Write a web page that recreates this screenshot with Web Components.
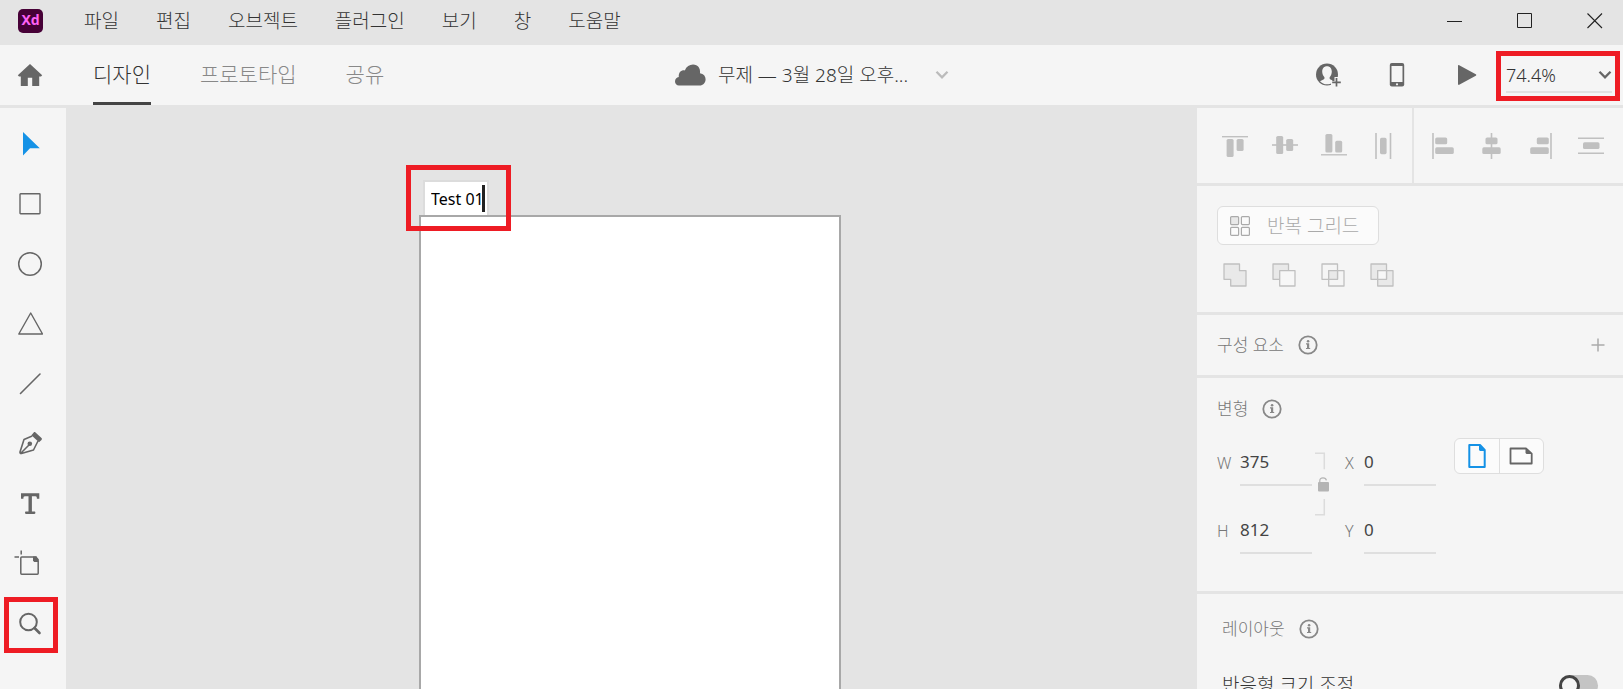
<!DOCTYPE html>
<html lang="ko">
<head>
<meta charset="utf-8">
<title>무제 — Xd</title>
<style>
html, body { margin: 0; height: 100%; }
body { font-family: "Noto Sans", "Noto Sans CJK KR", sans-serif; font-size: 19px; font-weight: 300; line-height: 24px; color: #333; background: #e4e4e4; overflow: hidden; }
</style>
</head>
<body>
<xd-app></xd-app>
<script>
const ICONS = {
  home: [26, 24, '<path fill="currentColor" d="M13 1 .8 12.3 2 13.4h1.8V23h7v-8.2h4.4V23h7v-9.600H24l1.200-1.100z"/>'],
  cloud: [32, 24, '<path fill="currentColor" d="M5 22.500c-2.400 0-4-1.700-4-4 0-2.400 1.600-4 3.800-4.400C4.300 9.800 7 7 10.800 7.400 12.400 3.600 15.500 1.500 19 1.500c5 0 7.700 4 7 8.700 3.600.6 5.600 3 5.600 6 0 3.700-2.600 6.300-6 6.300z"/>'],
  chevron: [14, 10, '<path fill="none" stroke="currentColor" stroke-width="2.300" d="m1.500 1.800 5.500 5.500 5.500-5.500"/>'],
  user: [26, 26, '<circle cx="12" cy="12.500" r="11" fill="currentColor"/><path fill="#f5f5f5" d="M12 4.200c-3 0-4.800 2.200-4.800 5.300 0 2.300.8 4 1.900 5.300.8 1 .5 2.200-.6 2.700L5 19.200c1.800 2 4.200 3.100 7 3.100 2 0 3.800-.5 5.300-1.500v-2.600l-1.800-.7c-1-.5-1.300-1.700-.5-2.700 1.100-1.400 1.800-3 1.800-5.300C16.800 6.400 15 4.200 12 4.200z"/><path fill="#f5f5f5" d="M19.500 15H26v11H16v-7h3.500z"/><path stroke="currentColor" stroke-width="1.700" d="M21.500 16v8.500M17.200 20.300h8.600"/>'],
  phone: [16, 26, '<rect x=".8" y="1" width="14.400" height="23.600" rx="2" fill="currentColor"/><path fill="#f5f5f5" d="M2.500 4h11v16h-11z"/><circle cx="8" cy="22.300" r="1.100" fill="#f5f5f5"/>'],
  play: [20, 22, '<path fill="currentColor" d="M1 1.800c0-.8.6-1 1.200-.6l16.600 9c.6.400.6 1.100 0 1.500l-16.600 9c-.6.400-1.200.1-1.200-.6z"/>'],
  min: [16, 16, '<path stroke="currentColor" d="M0 8.500h15"/>'],
  max: [16, 16, '<path fill="none" stroke="currentColor" d="M.5.5h14v14H.5z"/>'],
  close: [16, 16, '<path stroke="currentColor" stroke-width="1.100" d="m.5.5 14.500 14.500m0-14.500L.5 15"/>'],
  select: [26, 26, '<path fill="currentColor" d="M6 1v23.500l7-7.300h9.800z"/>'],
  rect: [26, 26, '<rect x="3" y="2.700" width="20" height="20" rx=".6" fill="none" stroke="currentColor" stroke-width="1.400"/>'],
  ellipse: [26, 26, '<circle cx="13" cy="13" r="11.300" fill="none" stroke="currentColor" stroke-width="1.500"/>'],
  polygon: [26, 26, '<path fill="none" stroke="currentColor" stroke-width="1.400" stroke-linejoin="round" d="M13.700 2 25.500 23H1.800z"/>'],
  line: [26, 26, '<path stroke="currentColor" stroke-width="1.600" stroke-linecap="round" d="M3.500 22.500 23 3"/>'],
  pen: [26, 26, '<path fill="none" stroke="currentColor" stroke-width="1.600" stroke-linejoin="round" d="M15.200 5 7 8.500 3 21c-.2 1 .4 1.700 1.400 1.500L16.500 19l4.500-9M4 22l8-8"/><circle cx="12.800" cy="12.700" r="2.300" fill="currentColor"/><path fill="currentColor" d="m14.400 4.300 2.300-2.800c.6-.6 1.200-.6 1.800 0l6 5.600c.6.6.6 1.200 0 1.800L22 11.300z"/>'],
  text: [26, 26, '<path fill="currentColor" d="M4 2.200h18.300v5.500h-2.400c0-1.700-.3-2.500-1.500-2.500h-3.500v15.300h2.500c1.300 0 1.300 2.400 0 2.400H9c-1.300 0-1.300-2.400 0-2.400h2.500V5.200H8c-1.300 0-1.600.8-1.600 2.500H4z"/>'],
  artboard: [32, 28, '<g transform="translate(-1 -1)"><path fill="none" stroke="currentColor" stroke-width="1.500" d="M23 8H8.700c-.5 0-.9.400-.9.900v15.400c0 .5.400.9.900.9h15.600c.5 0 .9-.4.900-.9V13z"/><path fill="currentColor" d="M20 7.500h3.200l2.600 2.800V13h-4.600L20 11.800z"/><path stroke="currentColor" stroke-width="1.500" d="M8.200 1.500v4M1.500 8H6"/></g>'],
  zoom: [26, 26, '<circle cx="11.500" cy="11" r="8.300" fill="none" stroke="currentColor" stroke-width="2"/><path stroke="currentColor" stroke-width="2.600" stroke-linecap="round" d="m17.500 17 5 5"/>'],
  alTop: [26, 26, '<path stroke="currentColor" stroke-width="1.400" d="M0 3.700h26"/><rect x="4.600" y="6" width="7" height="18" rx="1.600" fill="currentColor"/><rect x="14.600" y="6" width="7" height="12" rx="1.600" fill="currentColor"/>'],
  alMid: [26, 26, '<path stroke="currentColor" stroke-width="1.600" d="M0 12h26"/><rect x="4.200" y="3" width="7" height="18" rx="1.600" fill="currentColor"/><rect x="14.200" y="6" width="7" height="12" rx="1.600" fill="currentColor"/>'],
  alBot: [26, 26, '<path stroke="currentColor" stroke-width="1.400" d="M0 21.800h26"/><rect x="4.400" y="1" width="7" height="18.600" rx="1.600" fill="currentColor"/><rect x="14.200" y="7.800" width="7" height="11.800" rx="1.600" fill="currentColor"/>'],
  disH: [26, 26, '<path stroke="currentColor" stroke-width="1.600" d="M5 0v26M19.500 0v26"/><rect x="9" y="4.800" width="6.600" height="16.400" rx="1.600" fill="currentColor"/>'],
  alLeft: [26, 26, '<path stroke="currentColor" stroke-width="1.600" d="M3 0v26"/><rect x="5.200" y="4.500" width="12" height="6.800" rx="1.600" fill="currentColor"/><rect x="5.200" y="14.300" width="18.600" height="6.800" rx="1.600" fill="currentColor"/>'],
  alCen: [26, 26, '<path stroke="currentColor" stroke-width="1.600" d="M12.500 0v26"/><rect x="6.500" y="4.500" width="12" height="6.800" rx="1.600" fill="currentColor"/><rect x="3.300" y="14.300" width="18.400" height="6.800" rx="1.600" fill="currentColor"/>'],
  alRight: [26, 26, '<path stroke="currentColor" stroke-width="1.600" d="M22 0v26"/><rect x="7.800" y="4.500" width="12" height="6.800" rx="1.600" fill="currentColor"/><rect x="1.200" y="14.300" width="18.600" height="6.800" rx="1.600" fill="currentColor"/>'],
  disV: [26, 26, '<path stroke="currentColor" stroke-width="1.500" d="M0 5.200h26M0 20.200h26"/><rect x="5" y="9.200" width="16.500" height="6.900" rx="1.600" fill="currentColor"/>'],
  grid: [20, 20, '<g fill="none" stroke="currentColor" stroke-width="1.200"><rect x=".6" y=".6" width="8" height="8" rx="1" fill="#e8e8e8"/><rect x="11.400" y=".6" width="8" height="8" rx="1"/><rect x=".6" y="11.400" width="8" height="8" rx="1"/><rect x="11.400" y="11.400" width="8" height="8" rx="1"/></g>'],
  bUnion: [24, 24, '<path fill="#e9e9e9" stroke="currentColor" stroke-width="1.300" stroke-linejoin="round" d="M1 1h15.500v6.700H23V23H7.700v-6.700H1z"/>'],
  bSub: [24, 24, '<g stroke="currentColor" stroke-width="1.300" stroke-linejoin="round"><path fill="#e9e9e9" d="M1 1h15.500v15.300H1z"/><path fill="#f7f7f7" d="M7.700 7.700H23V23H7.700z"/></g>'],
  bInt: [24, 24, '<g stroke="currentColor" fill="none" stroke-width="1.300" stroke-linejoin="round"><path d="M1 1h15.500v15.300H1zM7.700 7.700H23V23H7.700z"/><path fill="#e9e9e9" d="M7.700 7.700h8.800v8.600H7.700z"/></g>'],
  bExc: [24, 24, '<g stroke="currentColor" fill="#e9e9e9" stroke-width="1.300" stroke-linejoin="round"><path fill-rule="evenodd" d="M1 1h15.500v15.300H1zM7.700 7.700H23V23H7.700z"/><path fill="#f7f7f7" d="M7.700 7.700h8.800v8.600H7.700z"/></g>'],
  info: [20, 20, '<circle cx="10" cy="10" r="8.700" fill="none" stroke="currentColor" stroke-width="1.800"/><path fill="currentColor" d="M8 8.300h3.200v4.600h1V14H8v-1.100h1V9.400H8z"/><circle cx="10.100" cy="6.200" r="1.300" fill="currentColor"/>'],
  plus: [14, 14, '<path stroke="currentColor" stroke-width="1.500" d="M7 .5v13M.5 7h13"/>'],
  link: [16, 64, '<path fill="none" stroke="#dcdcdc" stroke-width="1.500" d="M1 1.200h9.300v16M10.300 47v15.800H1"/><path fill="none" stroke="currentColor" stroke-width="1.200" d="M5.800 31v-2.200c0-1.800 1.300-3 3.200-3 2 0 3.200 1.200 3.400 2.600"/><rect x="4" y="30" width="11" height="9.500" rx="1" fill="currentColor"/>'],
  portrait: [20, 26, '<path fill="none" stroke="currentColor" stroke-width="2" stroke-linejoin="round" d="M2.300 2H13l4.700 5v17H2.300z"/><path fill="currentColor" d="M12 1.500 18.300 8H13l-1-1z"/>'],
  landscape: [26, 18, '<path fill="none" stroke="currentColor" stroke-width="1.800" stroke-linejoin="round" d="M2.500 1.500H18l5.700 5.200v9.800H2.500z"/><path fill="currentColor" d="M17.500 1 24 7h-5.500l-1-1z"/>']
};

const define = (name, markup, setup) => {
  const template = document.createElement('template');
  template.innerHTML = `<style>
    *, *::before { box-sizing: border-box; }
    button, input, select { font: inherit; color: inherit; background: none; border: 0; padding: 0; margin: 0; outline: 0; border-radius: 0; appearance: none; min-width: 0; }
    button { display: grid; place-items: center; }
  </style>` + markup;
  customElements.define(name, class extends HTMLElement {
    constructor() {
      super();
      this.attachShadow({ mode: 'open' }).append(template.content.cloneNode(true));
    }
    connectedCallback() { if (setup) setup(this, this.shadowRoot); }
  });
};

define('xd-icon', '<style>:host { display: block; flex: none; } svg { display: block; }</style><div></div>', (host, root) => {
  const [w, h, body] = ICONS[host.getAttribute('name')];
  root.querySelector('div').innerHTML = `<svg width="${w}" height="${h}" viewBox="0 0 ${w} ${h}" aria-hidden="true">${body}</svg>`;
});

define('xd-highlight', `<style>
  :host { display: block; position: absolute; border: 5px solid #ee1c24; box-sizing: border-box; pointer-events: none; z-index: 2; }
</style>`);

define('xd-titlebar', `<style>
  :host { display: flex; align-items: center; justify-content: space-between; height: 45px; padding: 0 20px 3px 18px; box-sizing: border-box; }
  nav, .win { display: flex; align-items: center; }
  nav { gap: 37px; }
  a { color: inherit; text-decoration: none; white-space: nowrap; }
  .logo { width: 25px; height: 24px; border-radius: 5px; background: #470137; color: #ff61f6; font-size: 14px; font-weight: 700; line-height: 22px; text-align: center; margin-right: 4px; }
  .win { gap: 54px; color: #222; }
</style>
<nav><span class="logo">Xd</span><a href="#">파일</a><a href="#">편집</a><a href="#">오브젝트</a><a href="#">플러그인</a><a href="#">보기</a><a href="#">창</a><a href="#">도움말</a></nav>
<div class="win"><button aria-label="최소화"><xd-icon name="min"></xd-icon></button><button aria-label="최대화"><xd-icon name="max"></xd-icon></button><button aria-label="닫기"><xd-icon name="close"></xd-icon></button></div>`);

define('xd-zoom', `<style>
  :host { display: grid; position: relative; width: 106px; height: 34px; margin-top: 2px; align-items: center; border-bottom: 2px solid #e1e1e1; font-size: 18px; }
  select, xd-icon { grid-area: 1 / 1; }
  select { width: 100%; height: 30px; color: #333; }
  xd-icon { justify-self: end; color: #666; pointer-events: none; }
  xd-highlight { inset: -8px -8px -10px -10px; }
</style>
<select aria-label="확대/축소"><option>74.4%</option></select><xd-icon name="chevron"></xd-icon><xd-highlight></xd-highlight>`);

define('xd-header', `<style>
  :host { display: grid; grid-template-columns: 1fr auto 1fr; height: 60px; background: #f5f5f5; color: #666; }
  .left, .doc, .right { display: flex; align-items: center; }
  .left { padding-left: 17px; gap: 50px; }
  .tabs { display: flex; gap: 49px; font-size: 21px; color: #888; align-self: stretch; }
  .tabs button { display: block; border-bottom: 3px solid transparent; white-space: nowrap; }
  .tabs .on { color: #333; border-color: #444; }
  .doc { gap: 12px; }
  .name { color: #333; white-space: nowrap; font-size: 19px; }
  .caret { color: #bbb; margin-left: 15px; }
  .right { justify-content: flex-end; padding-right: 11px; }
  .right button { margin-right: 48px; }
  .right button + button { margin-right: 52px; }
  .right button + button + button { margin-right: 29px; }
</style>
<div class="left"><button aria-label="홈"><xd-icon name="home"></xd-icon></button><div class="tabs"><button class="on">디자인</button><button>프로토타입</button><button>공유</button></div></div>
<div class="doc"><xd-icon name="cloud"></xd-icon><span class="name">무제 — 3월 28일 오후...</span><button class="caret" aria-label="문서 메뉴"><xd-icon name="chevron"></xd-icon></button></div>
<div class="right"><button aria-label="초대"><xd-icon name="user"></xd-icon></button><button aria-label="디바이스 미리보기"><xd-icon name="phone"></xd-icon></button><button aria-label="재생"><xd-icon name="play"></xd-icon></button><xd-zoom></xd-zoom></div>`);

define('xd-tools', `<style>
  :host { display: flex; flex-direction: column; align-items: center; padding: 6px 6px 0 0; background: #f5f5f5; color: #666; }
  button { width: 60px; height: 60px; position: relative; }
  .on { color: #1592e6; }
  xd-highlight { inset: 3px 2px 1px 4px; }
</style>
<button class="on" aria-label="선택"><xd-icon name="select"></xd-icon></button>
<button aria-label="사각형"><xd-icon name="rect"></xd-icon></button>
<button aria-label="타원"><xd-icon name="ellipse"></xd-icon></button>
<button aria-label="다각형"><xd-icon name="polygon"></xd-icon></button>
<button aria-label="선"><xd-icon name="line"></xd-icon></button>
<button aria-label="펜"><xd-icon name="pen"></xd-icon></button>
<button aria-label="텍스트"><xd-icon name="text"></xd-icon></button>
<button aria-label="대지"><xd-icon name="artboard"></xd-icon></button>
<button aria-label="확대/축소"><xd-icon name="zoom"></xd-icon><xd-highlight></xd-highlight></button>`);

define('xd-artboard', `<style>
  :host { display: flex; flex-direction: column; align-items: flex-start; width: 422px; }
  .name { position: relative; display: flex; align-items: center; width: 66px; height: 35px; margin-left: 4px; padding-left: 6px; background: #fff; border: 2px solid #dcdcdc; border-bottom: 0; color: #000; font-size: 16px; font-weight: 400; }
  input { width: 51px; height: 27px; }
  i { width: 3px; height: 27px; background: #222; }
  .page { flex: 1; align-self: stretch; background: #fff; border: 2px solid #a8a8a8; border-bottom: 0; }
  xd-highlight { inset: -17px -24px -16px -19px; }
</style>
<div class="name"><input aria-label="대지 이름" value="Test 01"><i></i><xd-highlight></xd-highlight></div>
<div class="page"></div>`);

define('xd-canvas', `<style>
  :host { display: flex; justify-content: center; padding: 72px 3px 0 0; min-width: 0; }
</style><xd-artboard></xd-artboard>`);

define('xd-section', `<style>
  :host { display: block; background: #f5f5f5; margin-bottom: 3px; padding: 0 20px; flex: none; }
</style><slot></slot>`);

define('xd-heading', `<style>
  :host { display: flex; align-items: center; gap: 14px; color: #777; font-size: 17px; white-space: nowrap; }
  xd-icon { color: #888; }
</style><slot></slot><xd-icon name="info"></xd-icon>`);

define('xd-field', `<style>
  :host { display: block; }
  label { display: grid; grid-template-columns: 23px 72px; align-items: center; color: #777; font-size: 16px; }
  :host([narrow]) label { grid-template-columns: 19px 72px; }
  input { height: 46px; padding-bottom: 2px; border-bottom: 2px solid #dfdfdf; color: #444; font-size: 17px; font-weight: 400; width: 100%; }
</style><label><span></span><input></label>`, (host, root) => {
  root.querySelector('span').textContent = host.getAttribute('label');
  root.querySelector('input').value = host.getAttribute('value');
});

define('xd-panel', `<style>
  :host { display: flex; flex-direction: column; min-height: 0; overflow: hidden; }
  .align { display: flex; padding: 0; height: 75px; color: #c0c0c0; }
  .align div { display: flex; justify-content: space-between; align-items: center; padding: 0 15px 0 25px; width: 217px; border-right: 2px solid #e4e4e4; }
  .align div + div { flex: 1; padding: 0 19px 0 16px; border: 0; }
  .ops { height: 126px; padding-top: 20px; color: #c0c0c0; }
  .repeat { display: flex; align-items: center; gap: 17px; width: 162px; height: 39px; padding-left: 12px; border: 1px solid #dedede; border-radius: 6px; background: #fbfbfb; color: #aaa; white-space: nowrap; }
  .bool { display: flex; gap: 25px; padding: 18px 0 0 6px; }
  .comp { display: flex; align-items: center; justify-content: space-between; height: 60px; padding-right: 18px; color: #aaa; }
  .trans { height: 213px; padding-top: 19px; }
  .fields { display: grid; grid-template-columns: 95px 16px 89px auto; grid-template-rows: 46px 46px; column-gap: 2px; row-gap: 22px; margin-top: 19px; }
  .fields > xd-icon { grid-row: 1 / 3; grid-column: 2; align-self: start; margin-top: 12px; color: #b4b4b4; }
  .x { grid-column: 3; margin-left: 13px; }
  .orient { grid-column: 4; display: flex; margin: -2px 0 0 31px; width: 90px; height: 36px; border: 1px solid #dedede; border-radius: 6px; background: #fbfbfb; }
  .orient button { flex: 1; color: #666; }
  .orient button + button { border-left: 1px solid #dedede; }
  .orient .on { color: #1592e6; }
  .layout { flex: 1 0 auto; margin: 0; padding: 23px 25px 0; }
  .resp { display: flex; justify-content: space-between; align-items: center; margin-top: 32px; }
  input { width: 39px; height: 21px; border-radius: 11px; background: #c4c4c4; }
  input::before { content: ""; display: block; width: 21px; height: 21px; border: 3px solid #444; border-radius: 50%; background: #f5f5f5; }
</style>
<xd-section class="align">
  <div><button aria-label="위쪽 정렬"><xd-icon name="alTop"></xd-icon></button><button aria-label="세로 가운데"><xd-icon name="alMid"></xd-icon></button><button aria-label="아래쪽 정렬"><xd-icon name="alBot"></xd-icon></button><button aria-label="가로 분포"><xd-icon name="disH"></xd-icon></button></div>
  <div><button aria-label="왼쪽 정렬"><xd-icon name="alLeft"></xd-icon></button><button aria-label="가로 가운데"><xd-icon name="alCen"></xd-icon></button><button aria-label="오른쪽 정렬"><xd-icon name="alRight"></xd-icon></button><button aria-label="세로 분포"><xd-icon name="disV"></xd-icon></button></div>
</xd-section>
<xd-section class="ops">
  <button class="repeat"><xd-icon name="grid"></xd-icon>반복 그리드</button>
  <div class="bool"><button aria-label="추가"><xd-icon name="bUnion"></xd-icon></button><button aria-label="빼기"><xd-icon name="bSub"></xd-icon></button><button aria-label="교차"><xd-icon name="bInt"></xd-icon></button><button aria-label="오버랩 제외"><xd-icon name="bExc"></xd-icon></button></div>
</xd-section>
<xd-section class="comp"><xd-heading>구성 요소</xd-heading><button aria-label="구성 요소 추가"><xd-icon name="plus"></xd-icon></button></xd-section>
<xd-section class="trans">
  <xd-heading>변형</xd-heading>
  <div class="fields">
    <xd-field label="W" value="375"></xd-field><xd-icon name="link"></xd-icon><xd-field class="x" narrow label="X" value="0"></xd-field>
    <div class="orient"><button class="on" aria-label="세로"><xd-icon name="portrait"></xd-icon></button><button aria-label="가로"><xd-icon name="landscape"></xd-icon></button></div>
    <xd-field label="H" value="812"></xd-field><xd-field class="x" narrow label="Y" value="0"></xd-field>
  </div>
</xd-section>
<xd-section class="layout">
  <xd-heading>레이아웃</xd-heading>
  <div class="resp"><label for="resp">반응형 크기 조정</label><input id="resp" type="checkbox" role="switch"></div>
</xd-section>`);

define('xd-app', `<style>
  :host { display: flex; flex-direction: column; height: 100vh; }
  main { display: grid; grid-template-columns: 66px 1fr 426px; flex: 1; min-height: 0; margin-top: 3px; }
</style>
<xd-titlebar></xd-titlebar><xd-header></xd-header>
<main><xd-tools></xd-tools><xd-canvas></xd-canvas><xd-panel></xd-panel></main>`);
</script>
</body>
</html>
